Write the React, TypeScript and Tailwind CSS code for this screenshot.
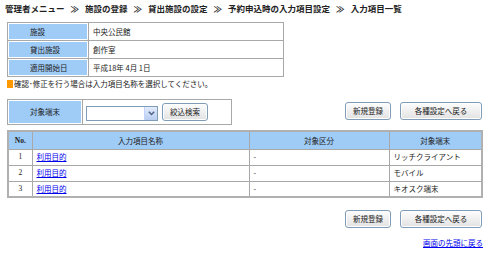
import React from "react";

const F = "font-['Noto_Sans_CJK_JP','Liberation_Sans',sans-serif]";

function Btn({ children, w }: { children: React.ReactNode; w: string }) {
  return (
    <div
      className={`${w} h-[18px] flex items-center justify-center rounded-[3px] border border-[#7f9db9] bg-gradient-to-b from-[#fdfdfd] to-[#e2e2e2] text-[7.5px] leading-none text-[#222] shadow-[inset_0_0_0_1px_#fff]`}
    >
      {children}
    </div>
  );
}

function Sep() {
  return <span className="mx-[6px]">≫</span>;
}

export default function App() {
  const rows = [
    { no: "1", term: "リッチクライアント" },
    { no: "2", term: "モバイル" },
    { no: "3", term: "キオスク端末" },
  ];
  return (
    <div className={`${F} w-[500px] h-[264px] bg-white text-[#222] px-[7px] overflow-hidden`}>
      {/* breadcrumb */}
      <div className="h-[14px] pt-[2px] -ml-[2px] flex items-center text-[8.5px] font-bold leading-none text-[#222] whitespace-nowrap">
        <span>管理者メニュー</span>
        <Sep />
        <span>施設の登録</span>
        <Sep />
        <span>貸出施設の設定</span>
        <Sep />
        <span>予約申込時の入力項目設定</span>
        <Sep />
        <span>入力項目一覧</span>
      </div>

      {/* info table */}
      <table className="mt-[8px] w-[277px] border-collapse text-[7.5px] leading-none">
        <tbody>
          {[
            ["施設", "中央公民館"],
            ["貸出施設", "創作室"],
            ["適用開始日", "平成18年 4月 1日"],
          ].map(([k, v]) => (
            <tr key={k} className="h-[18px]">
              <td className="w-[81px] border border-[#a8a8a8] bg-[#9fcbf7] pl-[22px] shadow-[inset_0_0_0_1px_#ffffff]">
                {k}
              </td>
              <td className="border border-[#a8a8a8] pl-[4px]">{v}</td>
            </tr>
          ))}
        </tbody>
      </table>

      {/* notice */}
      <div className="mt-[3px] h-[8px] flex items-center text-[7.5px] leading-none">
        <span className="w-[6px] h-[8px] bg-[#ff9900] mr-[1px]" />
        <span>確認･修正を行う場合は入力項目名称を選択してください。</span>
      </div>

      {/* filter + buttons */}
      <div className="mt-[11px] flex items-start">
        <div className="w-[225px] h-[26px] flex border border-[#a8a8a8]">
          <div className="w-[75px] h-full bg-[#9fcbf7] border-r border-[#a8a8a8] shadow-[inset_0_0_0_1px_#ffffff] flex items-center justify-center text-[7.5px] leading-none">
            対象端末
          </div>
          <div className="flex items-center pl-[3px] gap-[4px]">
            <div className="w-[72px] h-[15px] border border-[#7f9db9] bg-white flex justify-end mt-[2px]">
              <div className="w-[13px] h-full bg-gradient-to-b from-[#e3ecfb] to-[#b9cdf1] border-l border-[#c3d3fd] flex items-center justify-center">
                <svg width="7" height="5" viewBox="0 0 7 5">
                  <path d="M0.8 0.8 L3.5 3.6 L6.2 0.8" fill="none" stroke="#4d6185" strokeWidth="1.4" />
                </svg>
              </div>
            </div>
            <Btn w="w-[46px]">絞込検索</Btn>
          </div>
        </div>
        <div className="ml-auto mr-[11px] mt-[3px] flex gap-[9px]">
          <Btn w="w-[46px]">新規登録</Btn>
          <Btn w="w-[82px]">各種設定へ戻る</Btn>
        </div>
      </div>

      {/* list table */}
      <table className="mt-[5px] w-[476px] border-collapse text-[7.5px] leading-none border-2 border-[#b0b0b0]">
        <thead>
          <tr className="h-[18px] bg-[#9fcbf7]">
            <th className="w-[24px] border border-[#a8a8a8] font-bold font-['Liberation_Serif',serif] text-[7.5px]">No.</th>
            <th className="w-[217px] border border-[#a8a8a8] font-normal">入力項目名称</th>
            <th className="w-[140px] border border-[#a8a8a8] font-normal">対象区分</th>
            <th className="border border-[#a8a8a8] font-normal">対象端末</th>
          </tr>
        </thead>
        <tbody>
          {rows.map((r) => (
            <tr key={r.no} className="h-[16px]">
              <td className="border border-[#a8a8a8] text-center font-['Liberation_Serif',serif]">{r.no}</td>
              <td className="border border-[#a8a8a8] pl-[4px]">
                <a className="text-[#0000ee] underline">利用目的</a>
              </td>
              <td className="border border-[#a8a8a8] pl-[4px]">-</td>
              <td className="border border-[#a8a8a8] pl-[4px]">{r.term}</td>
            </tr>
          ))}
        </tbody>
      </table>

      {/* bottom buttons */}
      <div className="mt-[12px] flex justify-end pr-[11px] gap-[9px]">
        <Btn w="w-[46px]">新規登録</Btn>
        <Btn w="w-[82px]">各種設定へ戻る</Btn>
      </div>

      <div className="mt-[11px] flex justify-end pr-[10px] text-[7.5px] leading-none">
        <a className="text-[#0000ee] underline">画面の先頭に戻る</a>
      </div>
    </div>
  );
}
